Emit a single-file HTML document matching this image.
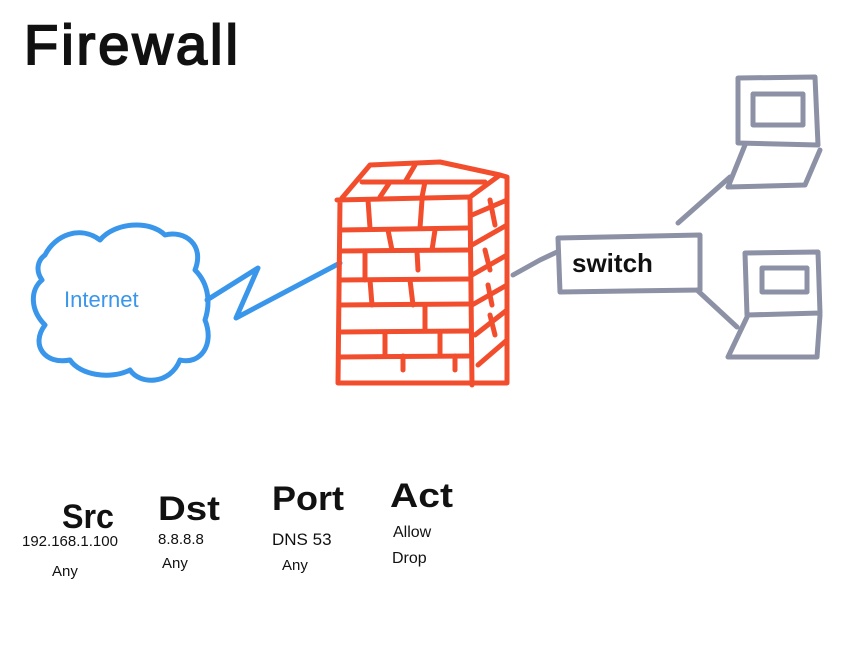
<!DOCTYPE html>
<html><head><style>
html,body{margin:0;padding:0;background:#fff;}
svg{display:block}
text{font-family:"Liberation Sans",sans-serif;}
</style></head><body>
<svg width="867" height="650" viewBox="0 0 867 650" xmlns="http://www.w3.org/2000/svg">
<rect width="867" height="650" fill="#fff"/>
<text x="24" y="64" font-size="56" fill="#111" stroke="#111" stroke-width="2" letter-spacing="3">Firewall</text>

<!-- cloud -->
<path d="M45,255 C55,235 80,225 100,240 C115,222 150,220 165,235 C185,230 205,245 195,270 C210,285 210,305 205,320 C215,345 200,365 180,360 C170,385 140,385 130,370 C110,380 80,375 70,360 C45,365 30,345 45,325 C30,310 30,290 42,280 C35,270 38,260 45,255 Z" fill="none" stroke="#3a96ea" stroke-width="5" stroke-linejoin="round"/>
<text x="64" y="307" font-size="22" fill="#3a96ea">Internet</text>
<path d="M207,300 L258,268 L236,318 L340,263" fill="none" stroke="#3a96ea" stroke-width="5" stroke-linecap="round" stroke-linejoin="round"/>

<!-- firewall -->
<g fill="none" stroke="#f24e2e" stroke-width="5" stroke-linecap="round" stroke-linejoin="round">
<path d="M337,200 L470,197 L472,385 M340,200 L338,383 L480,383"/>
<path d="M370,165 L440,162 L500,175 L470,197 M370,165 L342,198 M500,175 L507,177 L507,383 L480,383"/>
<path d="M362,182 L485,182 M415,165 L405,182 M390,182 L380,197 M425,182 L422,197"/>
<path d="M340,230 L467,228 M340,251 L470,250 M340,280 L470,279 M340,305 L470,304 M340,332 L470,331 M340,357 L470,356"/>
<path d="M368,200 L370,228 M422,200 L420,228 M388,230 L392,250 M435,230 L432,250 M365,251 L365,280 M417,251 L418,270 M370,280 L372,305 M410,280 L413,305 M425,305 L425,331 M385,332 L385,356 M440,332 L440,356 M403,356 L403,370 M455,356 L455,370"/>
<path d="M472,215 L507,200 M472,245 L507,225 M472,275 L507,255 M472,305 L507,285 M475,335 L507,310 M478,365 L507,340"/>
<path d="M490,200 L495,225 M485,250 L490,270 M488,285 L492,305 M490,315 L495,335"/>
</g>

<!-- network -->
<g fill="none" stroke="#8c91a6" stroke-width="5" stroke-linecap="round" stroke-linejoin="round">
<path d="M513,275 L540,260 L557,252"/>
<path d="M558,238 L700,235 L700,290 L560,292 Z"/>
<path d="M678,223 L730,177 M697,290 L737,327"/>
<path d="M738,78 L815,77 L818,145 L738,143 Z M753,94 L803,94 L803,125 L753,125 Z M745,145 L728,187 L805,185 L820,150"/>
<path d="M745,253 L818,252 L820,313 L747,315 Z M762,268 L807,268 L807,292 L762,292 Z M748,315 L728,357 L817,357 L820,315"/>
</g>
<text x="572" y="272" font-size="26" font-weight="bold" fill="#111">switch</text>

<!-- table -->
<g fill="#111">
<text x="62" y="528" font-size="34" font-weight="bold" textLength="52" lengthAdjust="spacingAndGlyphs">Src</text>
<text x="158" y="520" font-size="34" font-weight="bold" textLength="62" lengthAdjust="spacingAndGlyphs">Dst</text>
<text x="272" y="510" font-size="34" font-weight="bold" textLength="72" lengthAdjust="spacingAndGlyphs">Port</text>
<text x="390" y="507" font-size="34" font-weight="bold" textLength="63" lengthAdjust="spacingAndGlyphs">Act</text>
<text x="22" y="546" font-size="15">192.168.1.100</text>
<text x="52" y="576" font-size="15">Any</text>
<text x="158" y="544" font-size="15">8.8.8.8</text>
<text x="162" y="568" font-size="15">Any</text>
<text x="272" y="545" font-size="17">DNS 53</text>
<text x="282" y="570" font-size="15">Any</text>
<text x="393" y="537" font-size="16">Allow</text>
<text x="392" y="563" font-size="16">Drop</text>
</g>
</svg>
</body></html>
